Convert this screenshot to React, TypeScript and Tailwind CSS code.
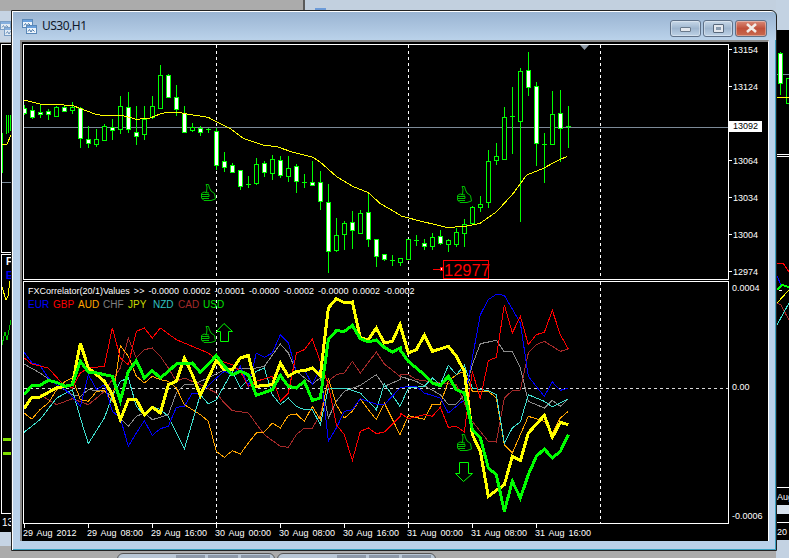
const FONT = "font-['Liberation_Sans',sans-serif]";

// [x, wickTop, wickBottom, bodyTop, bodyBottom, filled]
type C = [number, number, number, number, number, number];
const raw1: C[] = [
  [73,315,345,325,340,1],[97,318,358,331,350,1],[121,315,355,337,341,1],[145,328,360,333,341,1],[169,318,350,322,347,0],
  [193,318,337,320,334,1],[217,307,342,322,331,0],[241,322,444,325,415,1],[265,378,444,418,428,1],[289,388,442,418,431,0],
  [313,373,423,379,421,0],[337,357,420,382,389,1],[361,288,402,319,386,0],[385,276,400,322,388,1],[409,318,435,397,407,1],
  [433,318,420,356,403,0],[457,288,358,319,352,0],[481,195,323,226,323,0],[505,223,293,224,290,1],[529,255,347,292,326,1],
  [553,318,398,338,395,1],[577,369,396,382,389,0],[601,379,408,385,395,1],[625,383,400,388,389,1],[649,383,510,394,494,1],
  [673,456,516,484,500,1],[697,490,518,496,515,1],[721,510,570,511,559,1],[745,528,564,553,556,1],[769,474,555,492,548,0],
  [793,483,530,490,515,1],[817,465,540,478,518,0],[841,468,534,481,524,1],[865,468,545,505,527,0],[889,492,578,499,544,1],
  [913,522,564,545,548,1],[937,483,556,547,554,1],[961,513,630,547,602,1],[985,552,818,607,752,1],[1009,655,756,706,750,0],
  [1033,663,750,670,703,0],[1057,634,747,667,691,1],[1081,630,700,640,698,0],[1105,577,741,637,716,1],[1129,717,800,718,767,1],
  [1153,762,782,763,776,1],[1177,765,798,779,782,1],
];
const raw2: C[] = [
  [1,775,798,775,785,0],[25,718,780,718,778,0],[49,706,738,720,723,1],[73,716,750,728,738,1],[97,700,750,712,737,0],
  [121,690,735,707,730,1],[145,718,755,721,733,0],[169,685,740,697,731,0],[193,658,740,671,700,0],[217,617,672,622,668,0],
  [241,588,635,611,620,0],[265,450,623,484,607,0],[289,430,495,469,481,0],[313,322,480,352,476,0],[337,262,462,349,352,1],
  [361,205,665,214,364,0],[385,156,288,211,262,1],[409,247,497,259,430,1],[433,400,548,432,434,1],[457,274,435,341,431,0],
  [481,270,485,338,385,1],[505,318,444,379,381,1],
];
const candles = [
  ...raw1.map((c) => [Math.round(c[0] / 3), c[1] / 3, c[2] / 3, c[3] / 3, c[4] / 3, c[5]]),
  ...raw2.map((c) => [400 + Math.round(c[0] / 3), c[1] / 3, c[2] / 3, c[3] / 3, c[4] / 3, c[5]]),
];

// Points read from two crops: a (x from 0) and b (x from 400); y from offset.
const pts = (a: number[][], b: number[][], off: number) =>
  [...a.map(([x, y]) => `${x / 3},${off + y / 3}`), ...b.map(([x, y]) => `${400 + x / 3},${off + y / 3}`)].join(" ");

const ma = pts(
  [[72,300],[120,312],[216,316],[240,325],[290,344],[330,348],[360,345],[410,358],[450,354],[480,342],[505,336],[530,336],[560,342],[625,352],[650,366],[690,385],[730,415],[790,435],[830,440],[880,457],[940,472],[965,490],[1010,530],[1060,560],[1105,578],[1140,610],[1200,645]],
  [[0,647],[60,663],[140,682],[190,680],[240,670],[290,635],[340,580],[380,525],[430,505],[470,483],[502,469]],
  0,
);

const series: { color: string; w: number; p: string }[] = [
  { color: "#8b8b8b", w: 1, p: pts(
    [[72,258],[120,285],[170,320],[217,350],[241,355],[265,335],[313,340],[337,355],[361,420],[385,445],[409,415],[433,405],[457,425],[505,410],[529,345],[553,320],[577,320],[625,300],[673,275],[721,270],[769,270],[793,265],[841,198],[865,225],[889,280],[937,318],[961,300],[985,420],[1009,370],[1033,340],[1081,322],[1129,290],[1153,325],[1200,305]],
    [[0,295],[49,310],[121,350],[145,380],[169,378],[193,350],[217,260],[241,197],[290,187],[313,222],[337,220],[361,270],[385,370],[433,390],[457,367],[481,385],[505,362]], 278) },
  { color: "#a52a2a", w: 1, p: pts(
    [[120,350],[170,380],[217,362],[265,380],[290,360],[313,340],[337,305],[361,270],[385,180],[409,240],[433,215],[457,210],[481,235],[505,270],[529,310],[553,300],[601,320],[649,345],[673,375],[697,398],[745,405],[793,470],[841,505],[865,508],[889,470],[913,450],[937,450],[961,410],[985,310],[1009,290],[1033,285],[1057,250],[1081,285],[1129,222],[1153,258],[1200,295]],
    [[0,288],[25,290],[49,305],[121,315],[169,320],[217,430],[265,490],[289,492],[313,360],[337,338],[361,336],[385,225],[409,200],[433,190],[481,220],[505,213]], 278) },
  { color: "#ffa500", w: 1, p: pts(
    [[72,405],[96,423],[120,395],[145,375],[170,335],[195,310],[217,300],[241,365],[265,370],[290,340],[313,338],[337,370],[361,203],[385,235],[409,295],[433,315],[457,295],[481,305],[505,310],[529,330],[553,380],[577,395],[601,410],[625,430],[649,520],[673,538],[697,518],[721,528],[745,495],[769,465],[793,462],[817,435],[841,450],[865,412],[889,408],[913,430],[937,385],[961,425],[985,300],[1009,380],[1033,420],[1057,400],[1081,362],[1105,395],[1129,425],[1153,375],[1200,470]],
    [[0,470],[25,413],[73,424],[97,378],[121,378],[145,310],[169,290],[193,280],[217,340],[265,340],[289,360],[313,500],[337,525],[385,415],[433,430],[457,465],[481,420],[505,400]], 278) },
  { color: "#40e0d0", w: 1, p: pts(
    [[72,463],[120,425],[170,360],[217,335],[241,420],[265,497],[313,420],[337,355],[361,310],[385,300],[409,385],[433,412],[457,385],[481,395],[505,415],[553,513],[601,350],[625,378],[649,365],[697,280],[721,330],[769,280],[793,270],[817,350],[841,380],[865,360],[889,385],[913,395],[937,395],[961,440],[985,330],[1033,330],[1081,345],[1129,395],[1153,318],[1200,385]],
    [[0,385],[25,330],[73,325],[97,300],[121,320],[145,262],[169,290],[193,262],[217,330],[265,338],[289,350],[313,495],[337,450],[361,432],[385,350],[433,370],[457,387],[505,362]], 278) },
  { color: "#0000ff", w: 1, p: pts(
    [[72,222],[96,255],[120,262],[145,300],[170,320],[195,335],[217,355],[241,385],[265,290],[290,335],[313,320],[337,400],[361,420],[385,505],[409,465],[433,428],[457,472],[481,452],[505,445],[529,388],[553,385],[577,345],[601,345],[649,300],[673,280],[697,290],[721,265],[745,325],[769,225],[793,238],[817,225],[841,170],[865,195],[889,280],[913,275],[937,320],[961,270],[985,490],[1009,450],[1033,400],[1057,395],[1081,362],[1129,378],[1153,380],[1200,330]],
    [[0,330],[25,325],[49,325],[73,345],[121,360],[145,405],[193,365],[217,240],[241,110],[265,65],[290,48],[313,52],[361,135],[385,295],[433,355],[457,312],[481,337],[505,330]], 278) },
  { color: "#ff0000", w: 1, p: pts(
    [[72,240],[96,258],[145,270],[190,320],[217,330],[241,285],[265,270],[313,265],[337,150],[361,240],[385,260],[409,160],[433,150],[457,180],[481,150],[529,185],[577,205],[625,225],[649,245],[697,260],[721,280],[745,325],[769,310],[817,295],[841,370],[865,345],[889,225],[913,215],[937,183],[985,320],[1009,440],[1033,470],[1057,547],[1081,460],[1105,450],[1129,467],[1153,462],[1200,415]],
    [[0,405],[25,422],[73,410],[97,415],[121,388],[145,448],[169,445],[193,462],[217,280],[241,362],[265,248],[289,238],[313,80],[337,165],[361,115],[385,200],[409,170],[433,163],[457,97],[481,170],[505,213]], 278) },
  { color: "#ffff00", w: 3, p: pts(
    [[72,392],[96,357],[120,357],[145,343],[170,330],[195,325],[217,320],[241,195],[265,270],[290,290],[313,310],[337,350],[361,425],[385,365],[409,365],[433,410],[457,388],[481,405],[505,320],[529,310],[553,240],[577,290],[601,352],[649,248],[673,275],[697,275],[721,240],[745,232],[769,325],[817,320],[841,255],[865,295],[889,280],[913,278],[937,270],[961,292],[985,90],[1009,62],[1033,74],[1057,72],[1081,180],[1105,185],[1129,150],[1153,195],[1177,190],[1200,140]],
    [[0,140],[25,225],[49,215],[73,172],[97,220],[145,205],[169,235],[193,280],[217,470],[241,520],[265,655],[313,620],[337,535],[361,548],[385,465],[433,412],[457,478],[481,433],[505,440]], 278) },
  { color: "#00ff00", w: 3, p: pts(
    [[72,350],[96,322],[120,322],[145,307],[170,313],[195,325],[217,320],[241,250],[265,282],[290,285],[337,295],[361,368],[385,280],[409,248],[433,300],[457,278],[481,300],[505,280],[529,258],[577,255],[601,283],[649,233],[673,265],[697,290],[721,280],[745,290],[769,352],[817,335],[841,292],[865,325],[889,330],[913,310],[937,367],[961,360],[985,185],[1009,158],[1033,160],[1057,142],[1081,182],[1105,192],[1129,186],[1153,208],[1177,222],[1200,210]],
    [[0,215],[25,250],[73,290],[97,315],[121,323],[145,295],[169,335],[193,345],[217,455],[241,480],[265,570],[289,590],[313,700],[337,610],[361,660],[385,590],[409,535],[433,513],[457,540],[481,520],[505,470]], 278) },
];

function Thumb({ x, y }: { x: number; y: number }) {
  return (
    <g transform={`translate(${x} ${y})`} fill="none" stroke="#00c000" strokeWidth="1">
      <path d="M5.5 8.5 L6 3 L5 0.5 L7.5 0.5 L8.5 4 L10 7 L13.5 9.5 L14.5 15 L10 16.5 L3 16.5 L0.5 14 L0.5 9.5 L3 8 L5.5 8.5" />
      <path d="M1 10.5 L8 10.5 L8 12.5 L1 12.5 M1 14.5 L8 14.5 M4 8.5 L8 9" />
    </g>
  );
}

function WinIcon({ dim }: { dim?: boolean }) {
  const Part = ({ x, y }: { x: number; y: number }) => (
    <g transform={`translate(${x} ${y})`}>
      <rect x="0.5" y="0.5" width="10" height="8" fill="#eef5fc" stroke="#5a88b8" />
      <rect x="1" y="1" width="9" height="2" fill="#6aa0dc" />
      <path d="M2 6.5 L3.5 4.5 L5 7 L6.5 4.5 L8.5 6.5" fill="none" stroke="#4a78a8" />
    </g>
  );
  return (
    <svg width="15" height="15" viewBox="0 0 15 15" className={dim ? "opacity-70" : ""}>
      <Part x={0} y={0} />
      <Part x={4} y={6} />
    </svg>
  );
}

function PriceTick({ label }: { label: string }) {
  return (
    <div className="h-[37px] flex items-start">
      <span className="w-[3px] h-px bg-white mt-[5px]" />
      <span className="ml-[1px] leading-[12px]">{label}</span>
    </div>
  );
}

const times = ["29 Aug 2012","29 Aug 08:00","29 Aug 16:00","30 Aug 00:00","30 Aug 08:00","30 Aug 16:00","31 Aug 00:00","31 Aug 08:00","31 Aug 16:00"];
const legend: [string, string][] = [
  ["EUR","text-[#0000ff]"],["GBP","text-[#ff0000]"],["AUD","text-[#ffa500]"],["CHF","text-[#808080]"],
  ["JPY","text-[#c8d800]"],["NZD","text-[#30c0c0]"],["CAD","text-[#a52a2a]"],["USD","text-[#00e000]"],
];

function Btn({ className, children }: { className: string; children: React.ReactNode }) {
  return (
    <div className={`h-[17px] rounded-[3px] border border-[#5f7188] flex items-center justify-center shadow-[inset_0_0_0_1px_rgba(255,255,255,0.35)] ${className}`}>
      {children}
    </div>
  );
}

export default function App() {
  return (
    <div className={`relative w-[789px] h-[558px] overflow-hidden bg-[#ababab] ${FONT}`}>
      {/* top-right window behind */}
      <div className="absolute left-[303px] top-0 right-0 h-[30px] bg-[#c2d0df] border-l-2 border-[#5a5a5a]">
        <div className="absolute left-[10px] top-[8px] w-[11px] h-[3px] bg-[#6c9bd8]" />
      </div>

      {/* left window behind */}
      <div className="absolute left-0 top-[11px] w-[12px] h-[535px] bg-[#c6d4e4] overflow-hidden">
        <div className="absolute left-0 top-[10px]"><WinIcon dim /></div>
        <div className="absolute left-0 top-[31px] w-full h-px bg-[#8a8a8a]" />
        <div className="absolute left-0 top-[32px] w-full h-[489px] bg-black text-white text-[9px]">
          <div className="absolute left-[1px] top-[1px] right-0 h-[209px] border border-white" />
          <div className="absolute left-[1px] top-[211px] right-0 h-[260px] border border-white" />
          <svg className="absolute left-0 top-0" width="12" height="489" viewBox="0 43 12 489" shapeRendering="crispEdges" fill="none">
            <path d="M2.5 133V173M6.5 115V134M8.5 115V133M10.5 115V131" stroke="#00ff00" />
            <path d="M2 145L7 144L11 135" stroke="#ffff00" />
            <path d="M2 182H11" stroke="#7a8a9a" />
            <path d="M2 287L6 300L8 296L10 281" stroke="#ffff00" />
            <path d="M2 345L5 332L7 340L11 320" stroke="#00c000" />
            <path d="M3 439.5H11M3 453.5H11" stroke="#7fe000" strokeWidth="3" />
          </svg>
          <span className="absolute left-[6px] top-[214px] font-bold leading-[10px] text-[10px]">F</span>
          <span className="absolute left-[6px] top-[228px] font-bold leading-[10px] text-[10px] text-[#0000ff]">E</span>
          <span className="absolute left-[2px] top-[475px] leading-[10px] text-[10px]">13</span>
        </div>
      </div>

      {/* right window behind */}
      <div className="absolute left-[776px] top-0 right-0 h-[558px] bg-[#c3d2e2] overflow-hidden">
        <div className="absolute left-0 top-[30px] w-full h-[510px] bg-black">
          <svg className="absolute left-0 top-0" width="13" height="510" viewBox="776 30 13 510" shapeRendering="crispEdges" fill="none">
            <path d="M776 74H789" stroke="#7a8a9a" />
            <path d="M780.5 52V95M788.5 78V104" stroke="#00ff00" />
            <rect x="778" y="53" width="5" height="31" fill="#00ff00" stroke="none" />
            <rect x="779" y="54" width="3" height="29" fill="#fff" stroke="none" />
            <rect x="786.5" y="78.5" width="4" height="25" fill="#000" stroke="#00ff00" />
            <path d="M776 97H789" stroke="#ffff00" />
            <path d="M776 154H789M776 156H789" stroke="#fff" />
            <path d="M777 263H783L789 272" stroke="#ff0000" />
            <path d="M777 276L781 285" stroke="#0000ff" />
            <path d="M777 290L782 285L789 287" stroke="#00ff00" strokeWidth="2" />
            <path d="M779 290H782" stroke="#fff" />
            <path d="M777 303L789 290" stroke="#ffff00" />
            <path d="M777 303L781 305L789 320" stroke="#a52a2a" />
            <path d="M777 325L789 303" stroke="#40e0d0" />
            <path d="M776 487H789M776 522H789" stroke="#fff" />
          </svg>
          <div className="absolute left-0 top-[475px] w-full h-[9px] bg-[#d8e2ee]" />
          <span className="absolute left-[1px] top-[461px] text-white text-[9px] leading-[12px]">Aug</span>
          <span className="absolute left-[1px] top-[496px] text-white text-[9px] leading-[12px]">20</span>
        </div>
      </div>

      {/* bottom tabs */}
      <div className="absolute left-[117px] top-[553px] w-[158px] h-[8px] rounded-t-[6px] border border-[#555] bg-[#b9c7d6] flex justify-end gap-[3px] pr-[4px] pt-[1px]">
        <div className="w-[29px] h-[6px] bg-[#8c98a8]" /><div className="w-[30px] h-[6px] bg-[#8c98a8]" /><div className="w-[29px] h-[6px] bg-[#8c98a8]" />
      </div>
      <div className="absolute left-[277px] top-[553px] w-[159px] h-[8px] rounded-t-[6px] border border-[#555] bg-[#b9c7d6] flex justify-end gap-[3px] pr-[4px] pt-[1px]">
        <div className="w-[29px] h-[6px] bg-[#8c98a8]" /><div className="w-[30px] h-[6px] bg-[#8c98a8]" /><div className="w-[29px] h-[6px] bg-[#8c98a8]" />
      </div>

      {/* main MDI window */}
      <div className="absolute left-[11px] top-[10px] w-[766px] h-[541px] rounded-tr-[6px] border border-[#222] flex flex-col bg-[#b9d1ea] shadow-[inset_1px_1px_0_#fff,inset_-1px_-1px_0_#3aa0c0]">
        {/* title bar */}
        <div className="h-[28px] mt-px ml-px rounded-tr-[5px] bg-gradient-to-b from-[#9ab4d2] to-[#bad2ea] flex items-center pl-[9px] pr-[9px] shrink-0">
          <WinIcon />
          <span className="ml-[5px] text-[12px] tracking-[-0.5px] text-[#10182a] font-['Noto_Sans',sans-serif]">US30,H1</span>
          <div className="ml-auto flex gap-[2px] mt-[4px]">
            <Btn className="w-[31px] bg-gradient-to-b from-[#c8d8e8] via-[#9fb6cf] to-[#bed2e6]">
              <span className="w-[11px] h-[5px] mt-[3px] bg-[#e4e8ee] border border-[#6a7a8c] rounded-[1px]" />
            </Btn>
            <Btn className="w-[30px] bg-gradient-to-b from-[#c8d8e8] via-[#9fb6cf] to-[#bed2e6]">
              <span className="w-[11px] h-[9px] bg-[#e4e8ee] border border-[#59697c] rounded-[1px] flex items-center justify-center">
                <span className="w-[5px] h-[3px] bg-[#8a9cb0]" />
              </span>
            </Btn>
            <Btn className="w-[32px] bg-gradient-to-b from-[#d88a78] via-[#c0503a] to-[#c86a50]">
              <svg width="13" height="10" viewBox="0 0 13 10"><path d="M2 1L11 9M11 1L2 9" stroke="#f2ece8" strokeWidth="2.6" /></svg>
            </Btn>
          </div>
        </div>

        {/* client area */}
        <div className="ml-[8px] mr-[7px] h-[501px] shrink-0 border-t-2 border-l-2 border-[#888] border-r border-r-white bg-black pl-[1px] pt-[2px] text-white text-[9px] relative">
          {/* price pane */}
          <div className="flex h-[236px]">
            <div className="w-[706px] h-[236px] border border-white relative overflow-hidden">
              <svg className="block" width="704" height="234" viewBox="24 45 704 234">
                <g shapeRendering="crispEdges" fill="none">
                  <path d="M24 127.5H728" stroke="#7c8a98" />
                  <path d="M216.5 45V279M408.5 45V279M600.5 45V279" stroke="#fff" strokeDasharray="3 3" />
                  {candles.map((c, i) => {
                    const top = Math.round(c[3]);
                    const h = Math.max(1, Math.round(c[4]) - top);
                    const doji = h <= 1;
                    return (
                      <g key={i}>
                        <rect x={c[0]} y={Math.round(c[1])} width="1" height={Math.round(c[2]) - Math.round(c[1])} fill="#00ff00" stroke="none" />
                        {doji ? (
                          <rect x={c[0] - 2} y={top} width="5" height="1" fill="#00ff00" stroke="none" />
                        ) : (
                          <>
                            <rect x={c[0] - 2} y={top} width="5" height={h + 1} fill="#00ff00" stroke="none" />
                            <rect x={c[0] - 1} y={top + 1} width="3" height={h - 1} fill={c[5] ? "#ffffff" : "#000000"} stroke="none" />
                          </>
                        )}
                      </g>
                    );
                  })}
                  <polyline points={ma} stroke="#ffff00" />
                </g>
                <path d="M580 45H589L584.5 50Z" fill="#8c98a4" />
                <Thumb x={201} y={184} />
                <Thumb x={457} y={186} />
                <path d="M433 269.5H441" stroke="#ff0000" shapeRendering="crispEdges" />
                <rect x="440.5" y="267.5" width="2" height="3" fill="#fff" stroke="#ff0000" shapeRendering="crispEdges" />
              </svg>
              <div className="absolute left-[419px] top-[215px] w-[46px] h-[19px] border border-[#ff0000] text-[#ff0000] text-[16.5px] leading-[18px] text-center">12977</div>
            </div>
            <div className="w-[38px] pt-0">
              {["13154","13124","","13064","13034","13004","12974"].map((p, i) => (
                <PriceTick key={i} label={p} />
              ))}
            </div>
          </div>
          <div className="absolute left-[707px] top-[79px] w-[33px] h-[11px] bg-white text-black text-[9px] leading-[11px] text-center">13092</div>

          {/* indicator pane */}
          <div className="flex h-[243px] mt-px">
            <div className="w-[706px] h-[243px] border border-white relative overflow-hidden">
              <svg className="block" width="704" height="241" viewBox="24 282 704 241">
                <g shapeRendering="crispEdges" fill="none">
                  <path d="M24 388.5H728" stroke="#d8d8d8" strokeDasharray="3 3" />
                  <path d="M216.5 282V523M408.5 282V523M600.5 282V523" stroke="#fff" strokeDasharray="3 3" />
                  {series.map((s) => (
                    <polyline key={s.color} points={s.p} stroke={s.color} strokeWidth={s.w} />
                  ))}
                </g>
                <Thumb x={201} y={326} />
                <Thumb x={457} y={434} />
                <path d="M224 323.5L232.5 331.5H228.5V341.5H220.5V331.5H216.5Z" fill="none" stroke="#00ff00" />
                <path d="M459.5 462.5H468.5V473.5H472.5L463.5 481.5L455.5 473.5H459.5Z" fill="none" stroke="#00ff00" />
              </svg>
              <div className="absolute left-[4px] top-[3px] leading-[12px] whitespace-nowrap [word-spacing:1.5px]">
                FXCorrelator(20/1)Values &gt;&gt; -0.0000 0.0002 -0.0001 -0.0000 -0.0002 -0.0000 0.0002 -0.0002
              </div>
              <div className="absolute left-[4px] top-[17px] flex leading-[12px] text-[10px]">
                {legend.map(([n, c]) => (
                  <span key={n} className={`w-[25px] ${c}`}>{n}</span>
                ))}
              </div>
            </div>
            <div className="w-[38px] flex flex-col pl-[3px] pt-[1px] leading-[12px]">
              <span>0.0004</span>
              <span className="mt-[87px]">0.00</span>
              <span className="mt-[117px]">-0.0006</span>
            </div>
          </div>

          {/* time axis */}
          <div className="flex h-[17px] ml-px">
            {times.map((t) => (
              <div key={t} className="w-[64px] shrink-0 border-l border-white h-[4px] pt-[3px] leading-[12px] whitespace-nowrap [word-spacing:1.5px]">
                <span className="-ml-[2px]">{t}</span>
              </div>
            ))}
          </div>
        </div>
      </div>
    </div>
  );
}
